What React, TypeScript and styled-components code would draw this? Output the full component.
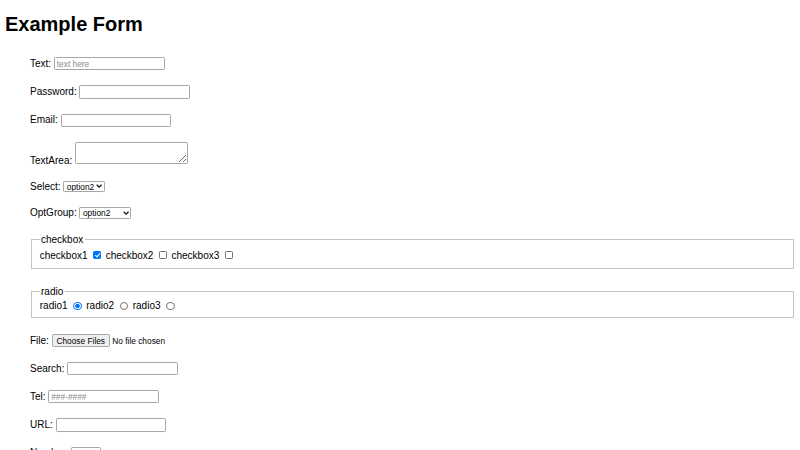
import React from "react";
import styled, { createGlobalStyle } from "styled-components";

const Global = createGlobalStyle`
  html {
    zoom: 0.625;
    overflow: hidden;
    background: #fff;
  }
  body {
    margin: 0 8px 8px;
    font-family: "Liberation Sans", Arial, sans-serif;
    font-size: 16px;
    color: #000;
  }
  input, select, button {
    font-family: "Liberation Sans", Arial, sans-serif;
    font-size: 13.333px;
  }
  input[type="file"]::file-selector-button {
    border: 1px solid #a8a8a8;
    border-radius: 2px;
    background: #efefef;
    font-family: "Liberation Sans", Arial, sans-serif;
    font-size: 13.333px;
  }
`;

const Title = styled.h1`
  font-size: 32px;
  font-weight: bold;
  margin: 21.44px 0;
`;

const Form = styled.form`
  display: flex;
  flex-direction: column;
  padding-left: 40px;
`;

const Row = styled.div`
  margin: 12px 0;
`;

const Group = styled.fieldset`
  margin: 12px 2px 13px;
  border: 2px groove #c4c4c4;
  & + & {
    margin-top: 14px;
  }
`;

const Field = styled.input<{ $w?: number }>`
  box-sizing: border-box;
  width: ${(p) => p.$w ?? 177}px;
  height: 21px;
  border: 1px solid #a8a8a8;
  border-radius: 2px;
  padding: 1px 3px;
  &::placeholder {
    color: #8a8a8a;
  }
`;

const Check = styled.input`
  appearance: none;
  position: relative;
  box-sizing: border-box;
  width: 13px;
  height: 13px;
  margin: 3px 3px 3px 4px;
  border: 1px solid #767676;
  border-radius: 2px;
  background: #fff;
  vertical-align: -2px;
  &:checked {
    background: #0075ff;
    border-color: #0075ff;
  }
  &:checked::after {
    content: "";
    position: absolute;
    left: 3.5px;
    top: 0.5px;
    width: 3px;
    height: 7px;
    border: solid #fff;
    border-width: 0 2px 2px 0;
    transform: rotate(42deg);
  }
`;

const Radio = styled.input`
  appearance: none;
  box-sizing: border-box;
  width: 13px;
  height: 13px;
  margin: 3px 3px 0 5px;
  border: 1px solid #767676;
  border-radius: 50%;
  background: #fff;
  vertical-align: -2px;
  &:checked {
    border: 1.5px solid #0075ff;
    background: radial-gradient(circle, #0075ff 0 3.2px, #fff 3.8px);
  }
`;

const Area = styled.textarea`
  box-sizing: border-box;
  width: 181px;
  height: 35px;
  border: 1px solid #a8a8a8;
  border-radius: 2px;
  font-family: "Liberation Mono", "Courier New", monospace;
  font-size: 13.333px;
`;

const SelectWrap = styled.span`
  position: relative;
  display: inline-block;
`;

const Choice = styled.select<{ $w: number }>`
  appearance: none;
  box-sizing: border-box;
  width: ${(p) => p.$w}px;
  height: 19px;
  padding: 0 16px 0 4px;
  border: 1px solid #a8a8a8;
  border-radius: 2px;
  background-color: #fff;
  color: #000;
`;

const Chevron = styled.svg`
  position: absolute;
  right: 4px;
  top: 6px;
  width: 10px;
  height: 7px;
  pointer-events: none;
`;

function Dropdown({ w, children }: { w: number; children: React.ReactNode }) {
  return (
    <SelectWrap>
      <Choice $w={w} defaultValue="option2">
        {children}
      </Choice>
      <Chevron viewBox="0 0 10 7">
        <path d="M1.2 1.3 L5 5.1 L8.8 1.3" fill="none" stroke="#111" strokeWidth="2" />
      </Chevron>
    </SelectWrap>
  );
}

export default function App() {
  return (
    <>
      <Global />
      <Title>Example Form</Title>
      <Form onSubmit={(e) => e.preventDefault()}>
        <Row>
          <label>
            Text: <Field type="text" placeholder="text here" />
          </label>
        </Row>
        <Row>
          <label>
            Password: <Field type="password" />
          </label>
        </Row>
        <Row>
          <label>
            Email: <Field type="email" />
          </label>
        </Row>
        <Row>
          <label>
            TextArea: <Area />
          </label>
        </Row>
        <Row>
          <label>
            Select:{" "}
            <Dropdown w={67}>
              <option value="option1">option1</option>
              <option value="option2">option2</option>
              <option value="option3">option3</option>
            </Dropdown>
          </label>
        </Row>
        <Row>
          <label>
            OptGroup:{" "}
            <Dropdown w={83}>
              <optgroup label="group1">
                <option value="option1">option1</option>
                <option value="option2">option2</option>
              </optgroup>
              <optgroup label="group2">
                <option value="option3">option3</option>
              </optgroup>
            </Dropdown>
          </label>
        </Row>
        <Group>
          <legend>checkbox</legend>
          <label>
            checkbox1 <Check type="checkbox" defaultChecked />
          </label>{" "}
          <label>
            checkbox2 <Check type="checkbox" />
          </label>{" "}
          <label>
            checkbox3 <Check type="checkbox" />
          </label>
        </Group>
        <Group>
          <legend>radio</legend>
          <label>
            radio1 <Radio type="radio" name="radio" defaultChecked />
          </label>{" "}
          <label>
            radio2 <Radio type="radio" name="radio" />
          </label>{" "}
          <label>
            radio3 <Radio type="radio" name="radio" />
          </label>
        </Group>
        <Row>
          <label>
            File: <input type="file" multiple />
          </label>
        </Row>
        <Row>
          <label>
            Search: <Field type="search" />
          </label>
        </Row>
        <Row>
          <label>
            Tel: <Field type="tel" placeholder="###-####" />
          </label>
        </Row>
        <Row>
          <label>
            URL: <Field type="url" />
          </label>
        </Row>
        <Row>
          <label>
            Number: <Field $w={48} type="number" />
          </label>
        </Row>
      </Form>
    </>
  );
}
